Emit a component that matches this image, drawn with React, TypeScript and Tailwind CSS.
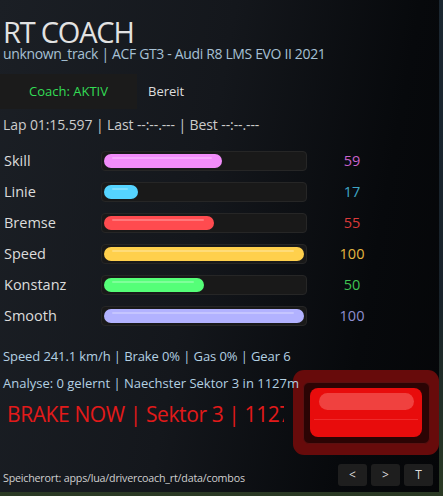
const stats = [
  { label: 'Skill', value: 59, fill: 'bg-[#f28cf9]', text: 'text-[#c863cc]' },
  { label: 'Linie', value: 17, fill: 'bg-[#55d4ff]', text: 'text-[#3fa6c6]' },
  { label: 'Bremse', value: 55, fill: 'bg-[#ff4b4f]', text: 'text-[#dc3a3a]' },
  { label: 'Speed', value: 100, fill: 'bg-[#ffd04c]', text: 'text-[#e6b640]' },
  { label: 'Konstanz', value: 50, fill: 'bg-[#55ff78]', text: 'text-[#3fc452]' },
  { label: 'Smooth', value: 100, fill: 'bg-[#b2b2ff]', text: 'text-[#8f8fd0]' },
];

function StatRow({ label, value, fill, text }: (typeof stats)[number]) {
  return (
    <div className="flex h-[31px] items-center">
      <span className="w-[101px] pl-[4px] text-[14.5px] text-[#dcdcdc]">{label}</span>
      <div className="h-[20px] w-[206px] rounded-[4px] border border-[#262626] bg-[#191919] p-[2px]">
        <div
          className={`relative h-full rounded-[7px] ${fill}`}
          style={{ width: `${Math.max(value, 15)}%` }}
        >
          <div className="absolute left-[8px] right-[10px] top-[3px] h-[2px] rounded-full bg-white/25" />
        </div>
      </div>
      <span className={`w-[90px] text-center text-[14.5px] ${text}`}>{value}</span>
    </div>
  );
}

function NavButton({ children }: { children: string }) {
  return (
    <div className="flex h-[22px] w-[29px] items-center justify-center rounded-[3px] bg-[#1e1e1e] text-[12px] text-[#dddddd]">
      {children}
    </div>
  );
}

export default function App() {
  return (
    <div className="h-[496px] w-[443px] overflow-hidden bg-[linear-gradient(180deg,#1b2731_0%,#18222a_60%,#2b3a24_100%)] font-['Open_Sans','Noto_Sans',sans-serif]">
      <div className="relative flex h-[492px] w-[439px] flex-col bg-[linear-gradient(100deg,#1b1f25_0%,#14171c_45%,#07090c_80%,#050608_100%)]">
        <div className="pl-[3px] pt-[18px] text-[29px] leading-[28px] tracking-[-1.2px] text-[#e2e2e2]">RT COACH</div>
        <div className="pl-[3px] text-[14px] leading-[16px] tracking-[-0.35px] text-[#a6c0d4]">
          unknown_track | ACF GT3 - Audi R8 LMS EVO II 2021
        </div>

        <div className="mt-[12px] flex items-center">
          <div className="flex h-[35px] w-[137px] items-center justify-center bg-[#1b1b1b] text-[13px] text-[#33dd55]">
            Coach: AKTIV
          </div>
          <span className="ml-[11px] text-[13px] text-[#dddddd]">Bereit</span>
        </div>

        <div className="mt-[7px] pl-[3px] text-[14px] leading-[18px] tracking-[-0.1px] text-[#cccccc]">
          Lap 01:15.597 | Last --:--.--- | Best --:--.---
        </div>

        <div className="mt-[11px] flex flex-col">
          {stats.map((s) => (
            <StatRow key={s.label} {...s} />
          ))}
        </div>

        <div className="mt-[16px] pl-[3px] text-[13px] leading-[18px] tracking-[-0.1px] text-[#b3d0e2]">
          Speed 241.1 km/h | Brake 0% | Gas 0% | Gear 6
        </div>
        <div className="relative z-10 mt-[9px] pl-[3px] text-[13px] leading-[18px] text-[#b3d0e2]">
          Analyse: 0 gelernt | Naechster Sektor 3 in 1127m
        </div>
        <div className="mt-[8px] w-[284px] overflow-hidden whitespace-nowrap pl-[7px] text-[21px] leading-[28px] tracking-[-0.4px] text-[#e21a1a]">
          BRAKE NOW | Sektor 3 | 1127
        </div>

        <div className="mt-auto mb-[6px] flex items-end justify-between pl-[3px] pr-[6px]">
          <span className="text-[10.7px] leading-[16px] tracking-[-0.2px] text-[#cfcfcf]">Speicherort: apps/lua/drivercoach_rt/data/combos</span>
          <div className="flex gap-[4px]">
            <NavButton>&lt;</NavButton>
            <NavButton>&gt;</NavButton>
            <NavButton>T</NavButton>
          </div>
        </div>

        {/* brake light overlay */}
        <div className="absolute left-[293px] top-[370px] flex h-[85px] w-[146px] items-center justify-center rounded-[11px] bg-[#670b0b]">
          <div className="flex h-[62px] w-[127px] items-center justify-center rounded-[6px] border border-[#5a1010] bg-[#2b0404]">
            <div className="relative h-[49px] w-[112px] rounded-[8px] bg-[#e80c0c]">
              <div className="absolute left-[9px] right-[8px] top-[5px] h-[17px] rounded-full bg-[#f0413f]" />
              <div className="absolute left-[4px] right-[4px] top-[31px] h-px bg-[#f02a2a]" />
            </div>
          </div>
        </div>
      </div>
    </div>
  );
}
